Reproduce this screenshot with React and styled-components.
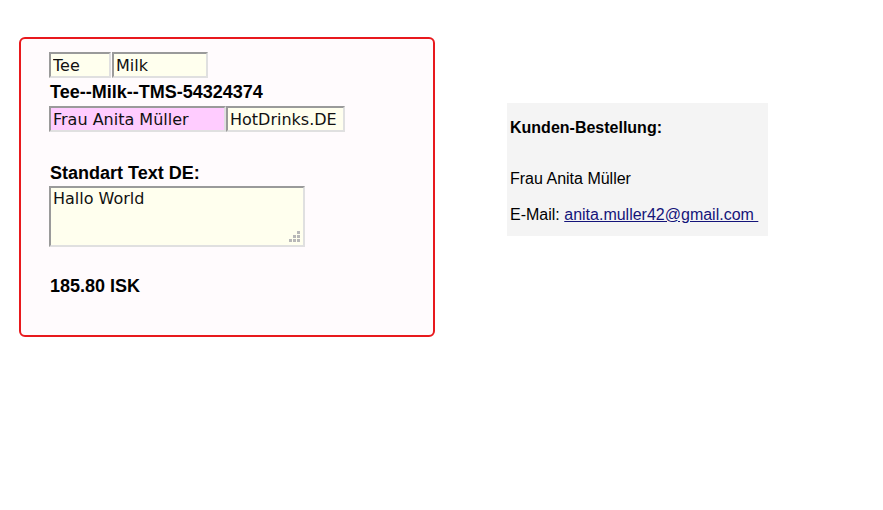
import styled, { createGlobalStyle } from 'styled-components';

const GlobalStyle = createGlobalStyle`
  body {
    margin: 0;
    background: #ffffff;
    font-family: "Liberation Sans", Arial, sans-serif;
    color: #000000;
  }
`;

export default function App() {
  return (
    <>
      <GlobalStyle />
      <Page>
        <Card>
          <InputRow $gap={1}>
            <Field $width={62} defaultValue='Tee' />
            <Field $width={96} defaultValue='Milk' />
          </InputRow>
          <Title>Tee--Milk--TMS-54324374</Title>
          <InputRow $gap={0}>
            <Field $width={177} $pink defaultValue='Frau Anita Müller' />
            <Field $width={119} defaultValue='HotDrinks.DE' />
          </InputRow>
          <Label>Standart Text DE:</Label>
          <TextWrap>
            <TextBox defaultValue='Hallo World' />
            <Grip viewBox='0 0 11 11'>
              <rect x='8' y='0' width='3' height='3' />
              <rect x='4' y='4' width='3' height='3' />
              <rect x='8' y='4' width='3' height='3' />
              <rect x='0' y='8' width='3' height='3' />
              <rect x='4' y='8' width='3' height='3' />
              <rect x='8' y='8' width='3' height='3' />
            </Grip>
          </TextWrap>
          <Price>185.80 ISK</Price>
        </Card>
        <Summary>
          <SummaryTitle>Kunden-Bestellung:</SummaryTitle>
          <SummaryLine $top={31}>Frau Anita Müller</SummaryLine>
          <SummaryLine $top={16}>
            E-Mail: <MailLink href='#'>anita.muller42@gmail.com </MailLink>
          </SummaryLine>
        </Summary>
      </Page>
    </>
  );
}

const Page = styled.div`
  display: flex;
  align-items: flex-start;
  padding: 37px 0 0 19px;
`;

const Card = styled.div`
  width: 416px;
  height: 300px;
  box-sizing: border-box;
  border: 2px solid #e8191d;
  border-radius: 6px;
  background: #fffbfd;
  padding: 13px 28px 0;
`;

const InputRow = styled.div`
  display: flex;
  gap: ${({ $gap }) => $gap}px;
`;

const Field = styled.input.attrs({ spellCheck: false })`
  width: ${({ $width }) => $width}px;
  height: 26px;
  box-sizing: border-box;
  margin: 0;
  padding: 1px 2px;
  border: 2px solid;
  border-color: #9a9a9a #e0e0e0 #e0e0e0 #9a9a9a;
  background: ${({ $pink }) => ($pink ? '#ffccff' : '#ffffee')};
  font-family: "DejaVu Sans", Verdana, sans-serif;
  font-size: 16px;
  color: #111111;
  outline: none;
`;

const Title = styled.div`
  height: 28px;
  line-height: 28px;
  padding-left: 1px;
  font-size: 18px;
  font-weight: 700;
`;

const Label = styled.div`
  margin-top: 30px;
  height: 22px;
  line-height: 22px;
  padding-left: 1px;
  font-size: 18px;
  font-weight: 700;
`;

const TextWrap = styled.div`
  position: relative;
  width: 256px;
  margin-top: 2px;
`;

const TextBox = styled.textarea.attrs({ spellCheck: false })`
  display: block;
  width: 256px;
  height: 61px;
  box-sizing: border-box;
  margin: 0;
  padding: 1px 2px;
  border: 2px solid;
  border-color: #9a9a9a #e0e0e0 #e0e0e0 #9a9a9a;
  background: #ffffee;
  font-family: "DejaVu Sans", Verdana, sans-serif;
  font-size: 16px;
  color: #111111;
  outline: none;
  resize: none;
`;

const Grip = styled.svg`
  position: absolute;
  right: 5px;
  bottom: 5px;
  width: 11px;
  height: 11px;
  fill: #b8b8b8;
`;

const Price = styled.div`
  margin-top: 28px;
  height: 22px;
  line-height: 22px;
  padding-left: 1px;
  font-size: 18px;
  font-weight: 700;
`;

const Summary = styled.div`
  width: 261px;
  box-sizing: border-box;
  margin: 66px 0 0 72px;
  padding: 15px 3px 11px;
  background: #f4f4f4;
  font-size: 16px;
`;

const SummaryTitle = styled.div`
  height: 20px;
  line-height: 20px;
  font-weight: 700;
`;

const SummaryLine = styled.div`
  margin-top: ${({ $top }) => $top}px;
  height: 20px;
  line-height: 20px;
`;

const MailLink = styled.a`
  color: #14147a;
  text-decoration: underline;
  white-space: pre;
`;
